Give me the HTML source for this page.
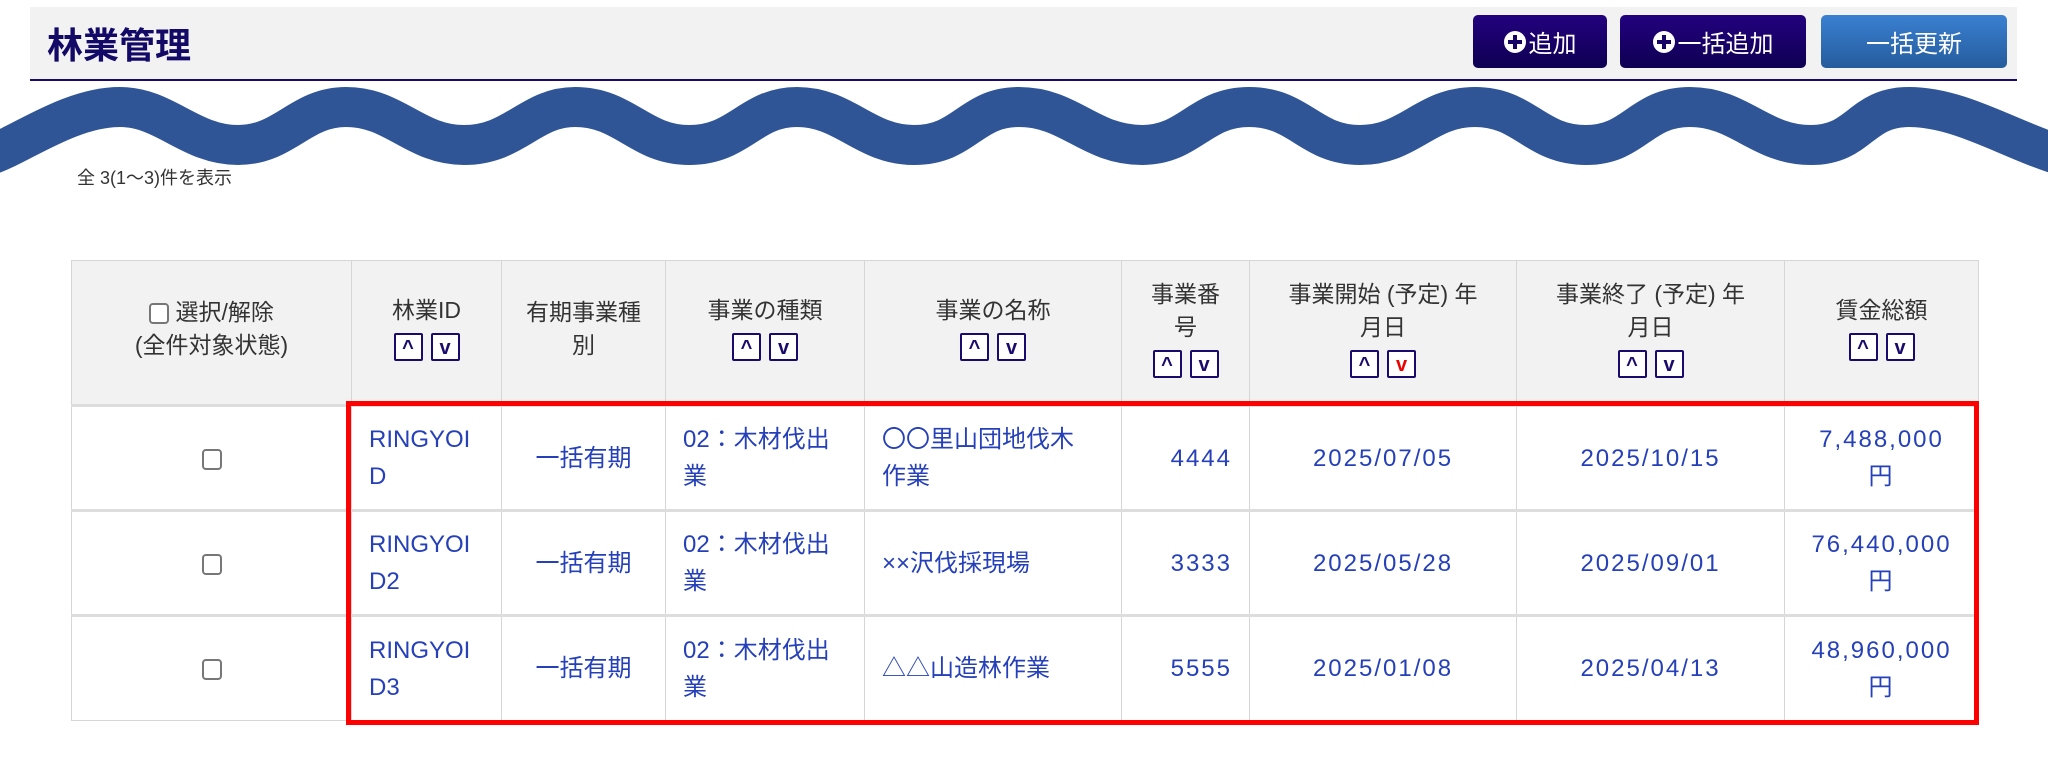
<!DOCTYPE html>
<html><head><meta charset="utf-8">
<style>
*{box-sizing:border-box;margin:0;padding:0}
body{width:2048px;height:765px;background:#fff;font-family:"Liberation Sans","Noto Sans CJK JP",sans-serif;position:relative;overflow:hidden}
.hdr{position:absolute;left:30px;top:7px;width:1987px;height:74px;background:#f2f2f2;border-bottom:2px solid #1a0a6b}
.title{position:absolute;left:17px;top:10px;font-size:36px;font-weight:bold;color:#120a66;letter-spacing:0}
.btn{position:absolute;top:8px;height:53px;border-radius:5px;color:#fff;font-size:24px;display:flex;align-items:center;justify-content:center}
.nav{background:linear-gradient(#23017f,#0e0052)}
.blu{background:linear-gradient(#3a80d2,#255c9c)}
.pl{width:22px;height:22px;border-radius:50%;background:#fff;position:relative;margin-right:3px}
.pl:before{content:"";position:absolute;left:9px;top:4px;width:4px;height:14px;background:#160567}
.pl:after{content:"";position:absolute;left:4px;top:9px;width:14px;height:4px;background:#160567}
.cnt{position:absolute;left:77px;top:164px;font-size:18px;color:#333}
table{position:absolute;left:71px;top:260px;border-collapse:collapse;table-layout:fixed;width:1907px}
td,th{border:1px solid #d6d6d6;font-weight:normal}
th{background:#f2f2f2;color:#333;font-size:23px;line-height:33px;height:145px;vertical-align:middle;text-align:center;padding-bottom:8px}
td{height:105px;font-size:24px;line-height:37px;color:#2540b8;vertical-align:middle;padding:0 17px}
td.n{letter-spacing:2px}
tr.r td{border-top:3px solid #ddd}
.s{display:inline-flex;gap:8px;margin-top:6px}
.s span{width:29px;height:28px;border:2px solid #1a0a6b;background:#fff;color:#1a0a6b;font-size:20px;line-height:26px;text-align:center;font-weight:bold;border-radius:2px}
.cb{display:inline-block;width:20px;height:21px;border:2px solid #777;border-radius:4px;background:#fff;vertical-align:middle}
.red{position:absolute;left:346px;top:401px;width:1633px;height:324px;border:5px solid #f00}
</style></head><body>
<div class="hdr">
<div class="title">林業管理</div>
<div class="btn nav" style="left:1443px;width:134px"><span class="pl"></span>追加</div>
<div class="btn nav" style="left:1590px;width:186px"><span class="pl"></span>一括追加</div>
<div class="btn blu" style="left:1791px;width:186px">一括更新</div>
</div>
<svg style="position:absolute;left:0;top:0" width="2048" height="200">
<path fill="none" stroke="#2f5597" stroke-width="40" d="M-10,155 C20,145 70,107 120,107 C165,107 190,145 238,145 C285,145 300,107 346,107 C395,107 415,145 464,145 C515,145 530,107 575,107 C625,107 640,145 689,145 C740,145 750,107 797,107 C845,107 865,145 914,145 C965,145 970,107 1019,107 C1070,107 1090,145 1142,145 C1190,145 1200,107 1249,107 C1300,107 1310,145 1360,145 C1410,145 1425,107 1475,107 C1525,107 1535,145 1586,145 C1635,145 1640,107 1690,107 C1740,107 1760,145 1811,145 C1860,145 1860,107 1909,107 C1960,107 2010,140 2060,155"/>
</svg>
<div class="cnt">全 3(1～3)件を表示</div>
<table>
<colgroup><col style="width:280px"><col style="width:150px"><col style="width:164px"><col style="width:199px"><col style="width:257px"><col style="width:128px"><col style="width:267px"><col style="width:268px"><col style="width:194px"></colgroup>
<tr>
<th><span class="cb"></span> 選択/解除<br>(全件対象状態)</th>
<th>林業ID<br><span class="s"><span>^</span><span>v</span></span></th>
<th>有期事業種<br>別</th>
<th>事業の種類<br><span class="s"><span>^</span><span>v</span></span></th>
<th>事業の名称<br><span class="s"><span>^</span><span>v</span></span></th>
<th>事業番<br>号<br><span class="s"><span>^</span><span>v</span></span></th>
<th>事業開始 (予定) 年<br>月日<br><span class="s"><span>^</span><span style="color:#e00">v</span></span></th>
<th>事業終了 (予定) 年<br>月日<br><span class="s"><span>^</span><span>v</span></span></th>
<th>賃金総額<br><span class="s"><span>^</span><span>v</span></span></th>
</tr>
<tr class="r"><td style="text-align:center"><span class="cb"></span></td><td>RINGYOI<br>D</td><td style="text-align:center">一括有期</td><td>02：木材伐出<br>業</td><td>〇〇里山団地伐木<br>作業</td><td class="n" style="text-align:right">4444</td><td class="n" style="text-align:center">2025/07/05</td><td class="n" style="text-align:center">2025/10/15</td><td class="n" style="text-align:center">7,488,000<br>円</td></tr>
<tr class="r"><td style="text-align:center"><span class="cb"></span></td><td>RINGYOI<br>D2</td><td style="text-align:center">一括有期</td><td>02：木材伐出<br>業</td><td>××沢伐採現場</td><td class="n" style="text-align:right">3333</td><td class="n" style="text-align:center">2025/05/28</td><td class="n" style="text-align:center">2025/09/01</td><td class="n" style="text-align:center">76,440,000<br>円</td></tr>
<tr class="r"><td style="text-align:center"><span class="cb"></span></td><td>RINGYOI<br>D3</td><td style="text-align:center">一括有期</td><td>02：木材伐出<br>業</td><td>△△山造林作業</td><td class="n" style="text-align:right">5555</td><td class="n" style="text-align:center">2025/01/08</td><td class="n" style="text-align:center">2025/04/13</td><td class="n" style="text-align:center">48,960,000<br>円</td></tr>
</table>
<div class="red"></div>
</body></html>
